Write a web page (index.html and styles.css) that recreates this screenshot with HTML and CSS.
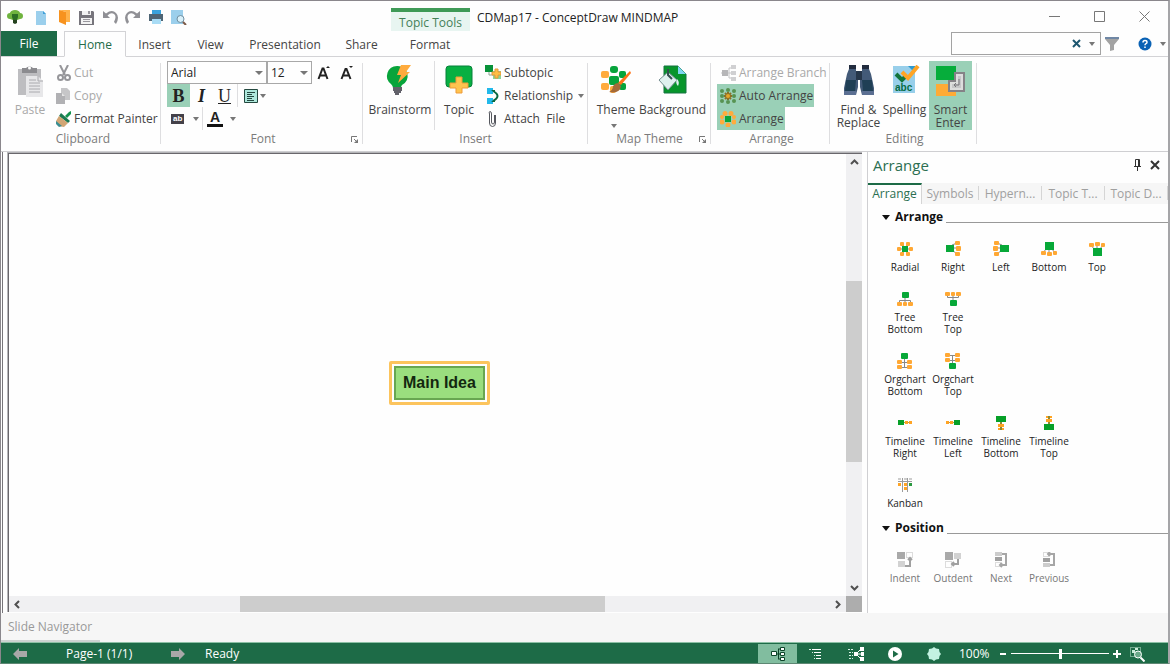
FILE: index.html
```html
<!doctype html>
<html lang="en">
<head>
<meta charset="utf-8">
<title>CDMap17 - ConceptDraw MINDMAP</title>
<link rel="stylesheet" href="styles.css">
</head>

<body>
<div class="app">

<header class="titlebar">
	<div class="quick-access">
		<svg class="logo" width="16" height="16" viewBox="0 0 16 16"><path d="M3 4a5 3 0 0 1 10 0a3 3 0 0 1 0 6l-3 1H6l-3-1a3 3 0 0 1 0-6" fill="#6fb33e"/><path d="M5 5h6v3l-1 3H6L5 8z" fill="#2c6e24"/><path d="M6 11h4v3l-2 1-2-1z" fill="#24421e"/></svg>
		<button aria-label="New"><svg width="16" height="16" viewBox="0 0 16 16"><path d="M3 2h7l3 3v11H3z" fill="#9bcfec"/><path d="M10 2v3h3z" fill="#3f9fd8"/></svg></button>
		<button aria-label="Open"><svg width="16" height="16" viewBox="0 0 16 16"><path d="M3 1h11v12h-4V3z" fill="#ffb24a"/><path d="M3 1l7 2v13l-7-3z" fill="#f7921e"/></svg></button>
		<button aria-label="Save"><svg width="16" height="16" viewBox="0 0 16 16"><path d="M0 2h14l1 1v13H0z" fill="#77757c"/><path d="M3 2h9v4H3zM2 9h11v6H2z" fill="#f2f2f2"/><path d="M9 2h2v3H9zM4 10h7v1H4zM4 12h7v1H4z" fill="#99979d"/></svg></button>
		<button aria-label="Undo"><svg width="16" height="16" viewBox="0 0 16 16"><path d="M1 2v7h7L5.500 6.500Q9 3 12 5t0 8l2 2q4-7 0-11T4 4.500z" fill="#909095"/></svg></button>
		<button aria-label="Redo"><svg width="16" height="16" viewBox="0 0 16 16"><path d="M15 2v7H8l2.500-2.500Q7 3 4 5t0 8l-2 2q-4-7 0-11t10 .5z" fill="#909095"/></svg></button>
		<button aria-label="Print"><svg width="16" height="16" viewBox="0 0 16 16"><path d="M4 1h9v4H4z" fill="#3aa2dd"/><path d="M1 5h14v7H1z" fill="#4f6575"/><path d="M4 10h9v5H4z" fill="#a9dcf5"/></svg></button>
		<button aria-label="Print preview"><svg width="16" height="16" viewBox="0 0 16 16"><path d="M0 1h12v14H0z" fill="#9bcfec"/><circle cx="9.500" cy="10" r="3.500" fill="#d9f1fb" stroke="#6f8ea0"/><path d="M12 13l3 3" stroke="#7b5a48" stroke-width="2"/></svg></button>
	</div>
	<div class="topic-tools">Topic Tools</div>
	<h1 class="window-title">CDMap17 - ConceptDraw MINDMAP</h1>
	<div class="window-buttons">
		<button aria-label="Minimize"><svg width="11" height="11" viewBox="0 0 11 11"><path d="M0 5.500h11"/></svg></button>
		<button aria-label="Maximize"><svg width="11" height="11" viewBox="0 0 11 11"><path d="M.5.5h10v10H.5z"/></svg></button>
		<button aria-label="Close"><svg width="11" height="11" viewBox="0 0 11 11"><path d="M.5.5l10 10M10.500.5l-10 10"/></svg></button>
	</div>
</header>

<nav class="ribbon-tabs">
	<a class="tab file" href="#">File</a>
	<a class="tab active" href="#">Home</a>
	<a class="tab insert" href="#">Insert</a>
	<a class="tab view" href="#">View</a>
	<a class="tab presentation" href="#">Presentation</a>
	<a class="tab share" href="#">Share</a>
	<a class="tab format" href="#">Format</a>
	<div class="search">
		<input type="text" aria-label="Search">
		<button aria-label="Clear"><svg width="9" height="9" viewBox="0 0 9 9"><path d="M1 1l7 7M8 1L1 8" stroke="#1d566f" stroke-width="2"/></svg></button>
		<button aria-label="Search options"><i class="caret"></i></button>
	</div>
	<button class="tool-filter" aria-label="Filter"><svg width="14" height="14" viewBox="0 0 14 14"><path d="M0 2h14L9 8v5l-4 1V8z" fill="#a3a3a3"/><path d="M0 0h14v2H0z" fill="#6f87a5"/></svg></button>
	<button class="tool-help" aria-label="Help"><svg width="14" height="14" viewBox="0 0 14 14"><circle cx="7" cy="7" r="6.500" fill="#0a62b5"/><path d="M5 5.500q0-2 2-2t2 1.700q0 1-1 1.500t-1 1.500M7 9.500v1.500" fill="none" stroke="#fff" stroke-width="1.500"/></svg></button>
	<button class="tool-more" aria-label="More"><i class="caret"></i></button>
</nav>

<div class="ribbon">
	<section class="group clipboard">
		<div class="group-body">
			<button class="big" disabled><svg width="32" height="32" viewBox="0 0 32 32"><path d="M4 4h23v26H4z" fill="#bdbdc0"/><path d="M8 8V3h4a4 3 0 0 1 7 0h4v5z" fill="#8b8b8f"/><circle cx="15.500" cy="3" r="1.500" fill="#fff"/><path d="M12 11h12l5 5v16H12z" fill="#e7e7e9"/><path d="M24 11v5h5M15 15h7M15 18h11M15 21h11M15 24h11M15 27h11" fill="none" stroke="#aaaaae"/></svg><span>Paste</span></button>
			<div class="rows">
				<button class="small" disabled><svg width="16" height="16" viewBox="0 0 16 16"><path d="M4 0l5 10M12 0L7 10" fill="none" stroke="#96969a" stroke-width="2"/><circle cx="4.500" cy="12.500" r="2.500" fill="none" stroke="#96969a" stroke-width="2"/><circle cx="11.500" cy="12.500" r="2.500" fill="none" stroke="#96969a" stroke-width="2"/></svg>Cut</button>
				<button class="small" disabled><svg width="16" height="16" viewBox="0 0 16 16"><path d="M5 0h6l3 3v9H5z" fill="#c6c6c8"/><path d="M0 5h6l3 3v8H0z" fill="#b1b1b4"/><path d="M6 5v3h3z" fill="#e6e6e6"/></svg>Copy</button>
				<button class="small"><svg width="16" height="16" viewBox="0 0 16 16"><path d="M15 0v3l-4 4-2-2 4-4z" fill="#14934e"/><path d="M5 2l9 8-2 2-9-7z" fill="#1c7a51"/><path d="M3 5l9 7-4 4-6-1-2-5z" fill="#d2a675"/><path d="M0 10l6 5-3 1-3-3z" fill="#398e92"/></svg>Format Painter</button>
			</div>
		</div>
		<h2>Clipboard</h2>
	</section>

	<section class="group font">
		<div class="group-body stack">
			<div class="row">
				<span class="select family"><select aria-label="Font"><option>Arial</option></select></span>
				<span class="select size"><select aria-label="Font size"><option>12</option></select></span>
				<button class="key" aria-label="Increase font size"><svg width="14" height="16" viewBox="0 0 14 16"><path d="M1.500 14L5.500 3.500h1L10.500 14M3 10.500h6" fill="none" stroke="#222" stroke-width="2"/><path d="M9 3l2-2 2 2z" fill="#222"/></svg></button>
				<button class="key" aria-label="Decrease font size"><svg width="14" height="16" viewBox="0 0 14 16"><path d="M1.500 14L5.500 4h1L10.500 14M3 10.500h6" fill="none" stroke="#222" stroke-width="2"/><path d="M9 1l2 2 2-2z" fill="#222"/></svg></button>
			</div>
			<div class="row">
				<button class="key bold on">B</button>
				<button class="key italic">I</button>
				<button class="key underline">U</button>
				<button class="key align" aria-label="Align"><svg width="14" height="14" viewBox="0 0 14 14"><path d="M.5.5h13v13H.5z" fill="#aee8dc" stroke="#24483f"/><path d="M3 3.500h8M3 5.500h5M3 7.500h7M3 9.500h5M3 11.500h7" stroke="#24483f"/></svg><i class="caret"></i></button>
			</div>
			<div class="row">
				<button class="key marker"><span class="chip">ab</span><i class="caret"></i></button>
				<button class="key color"><span class="ink">A</span><i class="caret"></i></button>
			</div>
		</div>
		<h2>Font</h2>
		<button class="launcher" aria-label="Font settings"><svg width="7" height="7" viewBox="0 0 7 7"><path d="M.5 6V.5H6M3 3l3 3" fill="none" stroke="#777"/><path d="M7 3v4H3z" fill="#777"/></svg></button>
	</section>

	<section class="group insert-group">
		<div class="group-body">
			<button class="big brainstorm"><svg width="32" height="32" viewBox="0 0 32 32"><path d="M13 1a10 10 0 0 1 5 19q-1 1-1 3H9q0-2-2-4a10 10 0 0 1 6-18" fill="#08a43b"/><path d="M9 23h9M9 25h9M10 27h7M11 29h4" stroke="#62616a" stroke-width="2"/><path d="M17 0h10l-5 7h4L14 18l3-8h-4z" fill="#ffab3d"/></svg><span>Brainstorm</span></button>
			<i class="divider"></i>
			<button class="big topic"><svg width="32" height="32" viewBox="0 0 32 32"><rect x="3" y="1" width="26" height="21" rx="3" fill="#08b042" stroke="#07803a"/><path d="M13 12h6v6h6v5h-6v5h-6v-5H7v-5h6z" fill="#ffc44f" stroke="#ee9b3a"/></svg><span>Topic</span></button>
			<div class="rows">
				<button class="small"><svg width="16" height="16" viewBox="0 0 16 16"><path d="M0 0h8v7H0z" fill="#079239"/><path d="M4 7v3h4" fill="none" stroke="#8ba293"/><path d="M8 6h8v8H8z" fill="#8cd596"/><path d="M10 4h3v3h3v3h-3v3h-3v-3H7V7h3z" fill="#ffbf45" stroke="#e3983c"/></svg>Subtopic</button>
				<button class="small"><svg width="16" height="16" viewBox="0 0 16 16"><path d="M2 0h6v6H2zM2 10h6v6H2z" fill="#22b9eb"/><path d="M8 3q9 5 0 10" fill="none" stroke="#0a683e" stroke-width="2"/><path d="M6 2h4v3zM6 14h4v-3z" fill="#0a683e"/></svg>Relationship<i class="caret"></i></button>
				<button class="small"><svg width="16" height="16" viewBox="0 0 16 16"><path d="M9.500 4v7q0 2-1.500 2t-1.500-2V3q0-2.500-1.500-2.500T4.500 3v9q0 3.500 3 3.500t3-3.500V4" fill="none" stroke="#55575e"/></svg>Attach&nbsp; File</button>
			</div>
		</div>
		<h2>Insert</h2>
	</section>

	<section class="group map-theme">
		<div class="group-body">
			<button class="big theme"><svg width="32" height="32" viewBox="0 0 32 32"><g fill="#07a43c"><rect x="9" y="11" width="10" height="9" rx="2"/><rect x="10" y="1" width="8" height="7" rx="3"/><rect x="19" y="6" width="7" height="7" rx="2"/><rect x="19" y="18" width="7" height="7" rx="2"/></g><g fill="#ffab3d"><rect x="1" y="6" width="8" height="7" rx="2"/><rect x="1" y="18" width="8" height="7" rx="2"/><rect x="10" y="21" width="6" height="7" rx="2"/></g><path d="M30 6l1 2-10 12-3-2z" fill="#ff7318"/><path d="M18 18l3 3q-1 8-12 6 4-2 4-6 2-3 5-3" fill="#a46a39"/></svg><span>Theme</span><i class="caret"></i></button>
			<button class="big background"><svg width="32" height="32" viewBox="0 0 32 32"><path d="M7 1h14l8 8v19H7z" fill="#07952b" stroke="#167342"/><path d="M21 1l8 8h-8z" fill="#7ed5ef"/><path d="M11 7l9 8-9 10-9-10z" fill="#dff1ef" stroke="#768e92"/><path d="M11 4v6l4 4" fill="none" stroke="#345050" stroke-width="2"/><path d="M20 14q3 3 1 7-3-3-1-7" fill="#dff1ef"/></svg><span>Background</span></button>
		</div>
		<h2>Map Theme</h2>
		<button class="launcher" aria-label="Map theme settings"><svg width="7" height="7" viewBox="0 0 7 7"><path d="M.5 6V.5H6M3 3l3 3" fill="none" stroke="#777"/><path d="M7 3v4H3z" fill="#777"/></svg></button>
	</section>

	<section class="group arrange">
		<div class="group-body">
			<div class="rows">
				<button class="small" disabled><svg width="16" height="16" viewBox="0 0 16 16"><path d="M1 8h12M9 3v10M9 3h4M9 13h4" fill="none" stroke="#c4c4c6"/><path d="M2 5h6v6H2z" fill="#b6b6b8"/><path d="M11 0h5v4h-5zM11 6h5v4h-5zM11 12h5v4h-5z" fill="#d0d0d2"/></svg>Arrange Branch</button>
				<button class="small on"><svg width="16" height="16" viewBox="0 0 16 16"><g fill="#579352"><circle cx="2" cy="3" r="2"/><circle cx="2" cy="8" r="2"/><circle cx="2" cy="13" r="2"/><circle cx="14" cy="3" r="2"/><circle cx="14" cy="8" r="2"/><circle cx="14" cy="13" r="2"/><circle cx="8" cy="2" r="2"/><circle cx="8" cy="14" r="2"/></g><path d="M5 5l6 6M11 5l-6 6M8 4v8M4 8h8" stroke="#8b7025" stroke-width="2"/><circle cx="8" cy="8" r="2" fill="#e5a629"/></svg>Auto Arrange</button>
				<button class="small on"><svg width="16" height="16" viewBox="0 0 16 16"><g fill="#ffab3d"><circle cx="5" cy="2.500" r="2.500"/><circle cx="11" cy="2.500" r="2.500"/><circle cx="2" cy="6" r="2"/><circle cx="2" cy="11" r="2.500"/><circle cx="14" cy="6" r="2"/><circle cx="14" cy="11" r="2.500"/><circle cx="8" cy="14" r="2.500"/></g><path d="M5 5h6v6H5z" fill="#08a43b"/></svg>Arrange</button>
			</div>
		</div>
		<h2>Arrange</h2>
	</section>

	<section class="group editing">
		<div class="group-body">
			<button class="big find"><svg width="32" height="32" viewBox="0 0 32 32"><path d="M6 4h7v3l2 3v12l-2 8H1v-7L4 9zM26 4h-7v3l-2 3v12l2 8h12v-7L28 9z" fill="#435a78"/><path d="M13 6h6v9h-6z" fill="#26364a"/><path d="M3 15h10l-1 11H2zM19 15h10l1 11H20z" fill="#1f3f55"/><path d="M6 0h7v4H6zM19 0h7v4h-7z" fill="#222c3e"/><path d="M1 26h12v4H1zM19 26h12v4H19z" fill="#5b6f92"/></svg><span>Find &amp;<br>Replace</span></button>
			<button class="big spelling"><svg width="32" height="32" viewBox="0 0 32 32"><path d="M4 1h22v27H4z" fill="#98cfea"/><path d="M19 1l7 7v-7z" fill="#2d9ad0"/><path d="M7 9l6 6 5-5" fill="none" stroke="#12743a" stroke-width="4"/><path d="M13 7l6 6L29 1" fill="none" stroke="#ffa425" stroke-width="4"/><text class="abc" x="6" y="26">abc</text></svg><span>Spelling</span></button>
			<button class="big smart on"><svg width="32" height="32" viewBox="0 0 32 32"><path d="M1 1h20v14H1z" fill="#06ad3b"/><path d="M1 19h20v12H1z" fill="#ffab36"/><path d="M20 8h9v18H14V16h6z" fill="#ddd" stroke="#858287" stroke-width="2"/><path d="M23 11h3v12h-9v-4h6z" fill="#c6c6c8"/><path d="M24 14v6h-4m1-2l-2 2 2 2" fill="none" stroke="#77757a"/></svg><span>Smart<br>Enter</span></button>
		</div>
		<h2>Editing</h2>
	</section>
</div>

<main class="workspace">
	<div class="editor">
		<div class="canvas">
			<div class="node"><span>Main Idea</span></div>
		</div>
		<div class="scroll vertical">
			<button aria-label="Scroll up"><svg width="9" height="6" viewBox="0 0 9 6"><path d="M1 5l3.500-3.500L8 5"/></svg></button>
			<i class="before"></i><i class="thumb"></i><i class="after"></i>
			<button aria-label="Scroll down"><svg width="9" height="6" viewBox="0 0 9 6"><path d="M1 1l3.500 3.500L8 1"/></svg></button>
		</div>
		<div class="scroll horizontal">
			<button aria-label="Scroll left"><svg width="6" height="9" viewBox="0 0 6 9"><path d="M5 1L1.500 4.500 5 8"/></svg></button>
			<i class="before"></i><i class="thumb"></i><i class="after"></i>
			<button aria-label="Scroll right"><svg width="6" height="9" viewBox="0 0 6 9"><path d="M1 1l3.500 3.500L1 8"/></svg></button>
		</div>
		<i class="corner"></i>
	</div>

	<aside class="panel">
		<div class="panel-head">
			<h2>Arrange</h2>
			<button aria-label="Pin"><svg width="9" height="12" viewBox="0 0 9 12"><path d="M2.500 7V.5h4V7M1 7.500h7M4.500 8v4M5.500 1v6" fill="none" stroke="#333"/></svg></button>
			<button aria-label="Close panel"><svg width="10" height="10" viewBox="0 0 10 10"><path d="M1 1l8 8M9 1L1 9" stroke="#333" stroke-width="2"/></svg></button>
		</div>
		<nav class="panel-tabs">
			<a class="active" href="#">Arrange</a>
			<a class="symbols" href="#">Symbols</a>
			<a href="#">Hypern...</a>
			<a href="#">Topic T...</a>
			<a href="#">Topic D...</a>
		</nav>

		<h3 class="section-head"><i></i>Arrange</h3>
		<div class="items">
			<div class="item-row">
				<button><svg width="16" height="16" viewBox="0 0 16 16"><path d="M2 8h12M5 2l6 12M11 2L5 14" stroke="#888"/><g fill="#ffa834"><rect x="3" y="1" width="4" height="4" rx="1"/><rect x="9" y="1" width="4" height="4" rx="1"/><rect x="0" y="6" width="4" height="4" rx="1"/><rect x="12" y="6" width="4" height="4" rx="1"/><rect x="3" y="11" width="4" height="4" rx="1"/><rect x="9" y="11" width="4" height="4" rx="1"/></g><path d="M5 5h6v6H5z" fill="#07a838"/></svg>Radial</button>
				<button><svg width="16" height="16" viewBox="0 0 16 16"><path d="M8 7h5M7 4l5-2M7 9l5 4" stroke="#888"/><path d="M1 4h8v7H1z" fill="#07a838"/><g fill="#ffa834"><rect x="10" y="0" width="5" height="4" rx="1"/><rect x="11" y="5" width="5" height="5" rx="1"/><rect x="10" y="11" width="5" height="4" rx="1"/></g></svg>Right</button>
				<button><svg width="16" height="16" viewBox="0 0 16 16"><path d="M3 7h5M9 4L4 2M9 9l-5 4" stroke="#888"/><path d="M7 4h9v7H7z" fill="#07a838"/><g fill="#ffa834"><rect x="1" y="0" width="5" height="4" rx="1"/><rect x="0" y="5" width="5" height="5" rx="1"/><rect x="1" y="11" width="5" height="4" rx="1"/></g></svg>Left</button>
				<button><svg width="16" height="16" viewBox="0 0 16 16"><path d="M8 8v5M5 8l-3 4M11 8l3 4" stroke="#888"/><path d="M4 1h9v8H4z" fill="#07a838"/><g fill="#ffa834"><rect x="0" y="10" width="5" height="4" rx="1"/><rect x="6" y="11" width="5" height="4" rx="1"/><rect x="12" y="10" width="4" height="4" rx="1"/></g></svg>Bottom</button>
				<button><svg width="16" height="16" viewBox="0 0 16 16"><path d="M8 3v5M2 4l3 4M14 4l-3 4" stroke="#888"/><path d="M4 7h9v8H4z" fill="#07a838"/><g fill="#ffa834"><rect x="0" y="2" width="5" height="4" rx="1"/><rect x="6" y="1" width="5" height="4" rx="1"/><rect x="12" y="2" width="4" height="4" rx="1"/></g></svg>Top</button>
			</div>
			<div class="item-row">
				<button><svg width="16" height="16" viewBox="0 0 16 16"><path d="M8 6v6M2.500 12V9.500h11V12" fill="none" stroke="#888"/><rect x="5" y="1" width="7" height="6" rx="1" fill="#07a838"/><g fill="#ffa834"><rect x="0" y="11" width="5" height="4" rx="1"/><rect x="6" y="11" width="4" height="4" rx="1"/><rect x="11" y="11" width="5" height="4" rx="1"/></g></svg>Tree<br>Bottom</button>
				<button><svg width="16" height="16" viewBox="0 0 16 16"><path d="M8 4v6M2.500 4v2.500h11V4" fill="none" stroke="#888"/><rect x="5" y="9" width="7" height="6" rx="1" fill="#07a838"/><g fill="#ffa834"><rect x="0" y="1" width="5" height="4" rx="1"/><rect x="6" y="1" width="4" height="4" rx="1"/><rect x="11" y="1" width="5" height="4" rx="1"/></g></svg>Tree<br>Top</button>
			</div>
			<div class="item-row">
				<button><svg width="16" height="16" viewBox="0 0 16 16"><path d="M7.500 6v8M3 9.500h9M3 14.500h9" stroke="#888"/><rect x="4" y="0" width="7" height="6" rx="1" fill="#07a838"/><g fill="#ffa834"><rect x="0" y="7" width="5" height="4" rx="1"/><rect x="10" y="7" width="5" height="4" rx="1"/><rect x="0" y="12" width="5" height="4" rx="1"/><rect x="10" y="12" width="5" height="4" rx="1"/></g></svg>Orgchart<br>Bottom</button>
				<button><svg width="16" height="16" viewBox="0 0 16 16"><path d="M7.500 2v9M3 2.500h9M3 7.500h9" stroke="#888"/><rect x="4" y="10" width="7" height="6" rx="1" fill="#07a838"/><g fill="#ffa834"><rect x="0" y="0" width="5" height="4" rx="1"/><rect x="10" y="0" width="5" height="4" rx="1"/><rect x="0" y="5" width="5" height="4" rx="1"/><rect x="10" y="5" width="5" height="4" rx="1"/></g></svg>Orgchart<br>Top</button>
			</div>
			<div class="item-row">
				<button><svg width="16" height="16" viewBox="0 0 16 16"><path d="M5 7.500h9" stroke="#b79a4a"/><path d="M1 5h6v5H1z" fill="#07a028"/><path d="M8 6h3v3H8zM12 6h3v3h-3z" fill="#ffa424"/></svg>Timeline<br>Right</button>
				<button><svg width="16" height="16" viewBox="0 0 16 16"><path d="M2 7.500h9" stroke="#b79a4a"/><path d="M9 5h6v5H9z" fill="#07a028"/><path d="M1 6h3v3H1zM5 6h3v3H5z" fill="#ffa424"/></svg>Timeline<br>Left</button>
				<button><svg width="16" height="16" viewBox="0 0 16 16"><path d="M8 6v9" stroke="#8a8a38" stroke-width="2"/><path d="M3 1h10v6H3z" fill="#07a028"/><path d="M5 9h6v3H5zM5 13h2v2H5zM9 13h2v2H9z" fill="#ffa424"/></svg>Timeline<br>Bottom</button>
				<button><svg width="16" height="16" viewBox="0 0 16 16"><path d="M8 1v9" stroke="#8a8a38" stroke-width="2"/><path d="M3 9h10v6H3z" fill="#07a028"/><path d="M5 4h6v3H5zM5 1h2v2H5zM9 1h2v2H9z" fill="#ffa424"/></svg>Timeline<br>Top</button>
			</div>
			<div class="item-row">
				<button><svg width="16" height="16" viewBox="0 0 16 16"><path d="M1 4.500h14M5.500 1v14M10.500 1v14M1 2h3M7 2h3M12 2h3" stroke="#9b9b9b"/><path d="M1 6h3v3H1zM7 6h3v3H7zM7 10h3v3H7z" fill="#ffa424"/><path d="M12 6h3v3h-3z" fill="#2a9a40"/></svg>Kanban</button>
			</div>
		</div>

		<h3 class="section-head"><i></i>Position</h3>
		<div class="items">
			<div class="item-row">
				<button disabled><svg width="16" height="16" viewBox="0 0 16 16"><path d="M0 0h8v7H0z" fill="#a9a9a9"/><path d="M1 9h7v6H1z" fill="#d2d2d2"/><path d="M9.500.5h6v5h-6z" fill="none" stroke="#bbb" stroke-dasharray="1 1"/><path d="M8 14h5V6M11 8l2-2 2 2" fill="none" stroke="#a0a0a0" stroke-width="2"/></svg>Indent</button>
				<button disabled><svg width="16" height="16" viewBox="0 0 16 16"><path d="M0 0h8v8H0z" fill="#a9a9a9"/><path d="M9 1h7v6H9z" fill="#d2d2d2"/><path d="M.5 9.500h6v6h-6z" fill="none" stroke="#bbb" stroke-dasharray="1 1"/><path d="M13 7v5H7M9 10l-2 2 2 2" fill="none" stroke="#a0a0a0" stroke-width="2"/></svg>Outdent</button>
				<button disabled><svg width="16" height="16" viewBox="0 0 16 16"><path d="M2 0h7v4H2z" fill="#ccc"/><path d="M2 5h7v4H2z" fill="#a0a0a0"/><path d="M2.500 10.500h5v4h-5z" fill="none" stroke="#bbb" stroke-dasharray="1 1"/><path d="M9 2h4v11H7M9 11l-2 2 2 2" fill="none" stroke="#a6a6a6" stroke-width="2"/></svg>Next</button>
				<button disabled><svg width="16" height="16" viewBox="0 0 16 16"><path d="M2 11h7v4H2z" fill="#ccc"/><path d="M2 6h7v4H2z" fill="#a0a0a0"/><path d="M2.500.5h5v4h-5z" fill="none" stroke="#bbb" stroke-dasharray="1 1"/><path d="M9 13h4V2H7M9 0L7 2l2 2" fill="none" stroke="#a6a6a6" stroke-width="2"/></svg>Previous</button>
			</div>
		</div>
	</aside>
</main>

<div class="navigator"><a href="#">Slide Navigator</a></div>

<footer class="statusbar">
	<button class="page-prev" aria-label="Previous page"><svg width="14" height="12" viewBox="0 0 14 12"><path d="M0 6l6-6v3h8v6H6v3z" fill="#a8a8a8"/></svg></button>
	<span class="page">Page-1 (1/1)</span>
	<button class="page-next" aria-label="Next page"><svg width="14" height="12" viewBox="0 0 14 12"><path d="M14 6L8 0v3H0v6h8v3z" fill="#a8a8a8"/></svg></button>
	<span class="ready">Ready</span>
	<div class="modes">
		<button class="on" aria-label="Map view"><svg width="16" height="16" viewBox="0 0 16 16"><path d="M6 8h5M8.500 3v10M8 3h3M8 13h3" fill="none" stroke="#0d4429"/><path d="M1.500 5.500h5v4h-5zM10.500 1.500h4v3h-4zM10.500 6.500h4v3h-4zM10.500 11.500h4v3h-4z" fill="#fff" stroke="#0d4429"/></svg></button>
		<button aria-label="Outline view"><svg width="16" height="16" viewBox="0 0 16 16"><path d="M3 3.500h9M5 6.500h7M7 9.500h5M7 12.500h5" stroke="#fff"/><path d="M0 3.500h2M3 6.500h1M5 9.500h1M5 12.500h1" stroke="#d9f2e6"/></svg></button>
		<button aria-label="Map and outline view"><svg width="16" height="16" viewBox="0 0 16 16"><path d="M0 3.500h6M1 6.500h4M1 9.500h4M1 12.500h4" stroke="#d9f2e6" stroke-dasharray="2 1"/><path d="M8 8l5-5M8 8h6M8 8l5 5" stroke="#fff"/><path d="M6 6h4v4H6zM12 1h4v4h-4zM13 6h3v4h-3zM12 11h4v4h-4z" fill="#fff"/></svg></button>
		<button aria-label="Play"><svg width="14" height="14" viewBox="0 0 14 14"><circle cx="7" cy="7" r="7" fill="#fff"/><path d="M5 3.500v7L10.500 7z" fill="#1d6b47"/></svg></button>
		<button aria-label="Mark"><svg width="14" height="14" viewBox="0 0 14 14"><path d="M7 0l2 1.500 3 .5.500 3L14 7l-1.500 2-.5 3-3 .5L7 14l-2-1.500-3-.5-.5-3L0 7l1.500-2L2 2l3-.5z" fill="#c3f2e1"/></svg></button>
	</div>
	<span class="percent">100%</span>
	<button class="zoom-key" aria-label="Zoom out"><svg width="8" height="8" viewBox="0 0 8 8"><path d="M1 4h6" stroke="#fff" stroke-width="2"/></svg></button>
	<input class="zoom" type="range" min="0" max="100" value="50" aria-label="Zoom">
	<button class="zoom-key" aria-label="Zoom in"><svg width="8" height="8" viewBox="0 0 8 8"><path d="M0 4h8M4 0v8" stroke="#fff" stroke-width="2"/></svg></button>
	<button class="zoom-fit" aria-label="Zoom to fit"><svg width="16" height="16" viewBox="0 0 16 16"><path d="M1.500 1.500h10v9h-10z" fill="none" stroke="#c9ecd9" stroke-dasharray="1 1"/><path d="M3 4h3v3H3zM6 2h3v2H6z" fill="#c9ecd9"/><circle cx="9" cy="8.500" r="3.500" fill="#6ba98a" stroke="#fff"/><path d="M11.500 11.500l4 4" stroke="#fff" stroke-width="2"/></svg></button>
</footer>

</div>
</body>
</html>
```

FILE: styles.css
```css
* {
	box-sizing: border-box;
}

body {
	margin: 0;
	font: 12px/16px "Open Sans", "Noto Sans", sans-serif;
	color: #444;
	background: #fefefe;
}

h1, h2, h3 {
	margin: 0;
	font-size: 12px;
	font-weight: normal;
}

a {
	color: inherit;
	text-decoration: none;
}

button {
	display: flex;
	align-items: center;
	justify-content: center;
	flex: none;
	margin: 0;
	padding: 0;
	border: 0;
	background: none;
	font: inherit;
	color: inherit;
}

button:disabled {
	color: #a9a9a9;
}

svg {
	display: block;
	flex: none;
}

.on {
	background: #9ad0b7;
}

.caret {
	flex: none;
	border: 3px solid transparent;
	border-top: 4px solid #777;
	border-bottom: 0;
}

.app {
	display: flex;
	flex-direction: column;
	height: 100vh;
	border: 1px solid #8a878c;
	border-right: 2px solid #a5a5a8;
	border-bottom-color: #5d8773;
}

/* Title bar */

.titlebar {
	display: flex;
	align-items: center;
	flex: none;
	height: 30px;
}

.quick-access {
	display: flex;
	align-items: center;
	gap: 7px;
	width: 390px;
	padding: 2px 0 0 6px;
}

.logo {
	margin-right: 3px;
}

.topic-tools {
	align-self: flex-end;
	width: 79px;
	height: 23px;
	padding-top: 3px;
	border-top: 4px solid #3f9a57;
	background: #e8f5f1;
	color: #448058;
	text-align: center;
}

.window-title {
	flex: 1;
	padding: 4px 0 0 7px;
	color: #222;
}

.window-buttons {
	display: flex;
	margin-right: 1px;
}

.window-buttons button {
	width: 45px;
	height: 28px;
}

.window-buttons path {
	fill: none;
	stroke: #777;
}

/* Ribbon tabs */

.ribbon-tabs {
	display: flex;
	align-items: center;
	flex: none;
	height: 26px;
	border-bottom: 1px solid #d3d3d6;
}

.tab {
	align-self: stretch;
	padding-top: 6px;
	text-align: center;
}

.file {
	width: 56px;
	margin-right: 7px;
	padding-top: 5px;
	background: #1d6b47;
	color: #fff;
}

.tab.active {
	width: 62px;
	margin-bottom: -1px;
	border: 1px solid #d3d3d6;
	border-bottom-color: #fefefe;
	padding-top: 5px;
	background: #fefefe;
	color: #236b49;
}

.insert {
	width: 57px;
}

.view {
	width: 55px;
}

.presentation {
	width: 94px;
}

.share {
	width: 59px;
}

.format {
	width: 78px;
}

.search {
	display: flex;
	align-items: center;
	align-self: flex-start;
	width: 150px;
	height: 23px;
	margin: 1px 4px 0 auto;
	border: 1px solid #a3a3a3;
}

.search input {
	flex: 1;
	min-width: 0;
	border: 0;
	background: none;
	font: inherit;
}

.search button {
	width: 16px;
	height: 20px;
}

.tool-filter {
	margin-right: 19px;
}

.tool-help {
	margin-right: 8px;
}

.tool-more {
	margin-right: 2px;
}

/* Ribbon */

.ribbon {
	display: flex;
	flex: none;
	height: 95px;
	border-bottom: 1px solid #cfcfd2;
}

.group {
	position: relative;
	flex: none;
	padding-top: 4px;
}

/* The separator is shorter than the group itself. */
.group::after {
	content: "";
	position: absolute;
	top: 6px;
	right: 0;
	width: 1px;
	height: 81px;
	background: #dedee0;
}

.group h2 {
	padding-top: 1px;
	color: #7b7b7b;
	text-align: center;
}

.group-body {
	display: flex;
	height: 69px;
}

.group-body.stack {
	flex-direction: column;
}

.row {
	display: flex;
	align-items: center;
	height: 23px;
}

.big {
	flex-direction: column;
	justify-content: flex-start;
	padding-top: 4px;
	line-height: 13px;
}

.big span {
	margin-top: 6px;
}

.big .caret {
	margin-top: 8px;
	margin-right: 4px;
}

.small {
	height: 23px;
	padding: 1px 1px 0 3px;
	gap: 3px;
	white-space: nowrap;
}

.small .caret {
	margin-left: 2px;
}

.rows {
	display: flex;
	flex-direction: column;
	align-items: flex-start;
}

.clipboard {
	width: 160px;
}

.clipboard h2 {
	padding-left: 4px;
}

.clipboard .big {
	width: 52px;
	padding-left: 6px;
}

.clipboard .small {
	gap: 2px;
}

.font {
	width: 202px;
	padding-left: 6px;
}

.font h2 {
	padding-right: 4px;
}

.insert-group {
	width: 225px;
}

.map-theme {
	width: 123px;
}

.arrange {
	width: 119px;
	padding-left: 6px;
}

.arrange h2 {
	padding-right: 4px;
}

.editing {
	width: 147px;
}

.editing h2 {
	padding-left: 2px;
}

.editing .group-body {
	gap: 2px;
	padding-left: 7px;
}

.brainstorm {
	width: 71px;
	padding-left: 3px;
}

.divider {
	width: 1px;
	background: #dedee0;
}

.topic {
	width: 47px;
	padding-left: 1px;
}

.theme {
	width: 52px;
	margin-left: 2px;
}

.background {
	width: 61px;
}

.find, .smart {
	width: 43px;
}

.spelling {
	width: 45px;
}

.abc {
	font: bold 10px "Liberation Sans", sans-serif;
	fill: #056b43;
}

.launcher {
	position: absolute;
	right: 5px;
	bottom: 8px;
}

/* Font controls */

.select {
	position: relative;
}

.select::after {
	content: "";
	position: absolute;
	top: 10px;
	right: 4px;
	border: 4px solid transparent;
	border-top-color: #777;
	border-bottom: 0;
	pointer-events: none;
}

.select select {
	display: block;
	width: 100%;
	height: 23px;
	padding: 1px 3px 0;
	border: 1px solid #a8a8a8;
	border-radius: 0;
	background: #fefefe;
	appearance: none;
	font: inherit;
	color: #222;
}

.family {
	width: 100px;
}

.size {
	width: 45px;
}

.key {
	width: 23px;
	height: 23px;
	font-family: "Liberation Serif", serif;
	font-size: 18px;
	color: #222;
}

.key .caret {
	margin-left: 2px;
}

.bold {
	font-weight: bold;
}

.italic {
	font-style: italic;
	font-weight: bold;
}

.underline {
	text-decoration: underline;
}

.align {
	width: 34px;
	margin-left: 1px;
	border-left: 1px solid #dedee0;
}

.marker, .color {
	justify-content: space-between;
	width: 36px;
	padding: 0 3px 0 4px;
}

.marker {
	border-right: 1px solid #dedee0;
}

.chip {
	padding: 0 2px;
	background: #444149;
	font: bold 8px/10px "Liberation Sans", sans-serif;
	color: #fff;
}

.ink {
	width: 16px;
	border-bottom: 3px solid #111;
	font: bold 14px/13px "Liberation Sans", sans-serif;
}

/* Map canvas */

.workspace {
	display: flex;
	flex: 1;
	min-height: 0;
}

/* Edge of the collapsed dock on the left */
.workspace::before {
	content: "";
	width: 1px;
	margin: 0 4px 0 1px;
	background: #77757a;
}

.editor {
	display: grid;
	grid-template-columns: 1fr 16px;
	grid-template-rows: 1fr 16px;
	flex: 1;
	margin: 0 5px 1px 0;
	padding: 1px 0 0 1px;
	border: solid #b5b5b8;
	border-width: 1px 0 0 1px;
	box-shadow: inset 1px 1px #69676c;
}

.canvas {
	position: relative;
}

.node {
	position: absolute;
	left: 380px;
	top: 207px;
	padding: 2px;
	border: 3px solid #fcc45d;
	border-radius: 2px;
}

.node span {
	display: block;
	padding: 7px;
	border: 2px solid #68a651;
	background: #9ade7e;
	font: bold 16px/16px "Liberation Sans", sans-serif;
	color: #13280f;
}

.scroll {
	display: flex;
	background: #f0f0f2;
}

.vertical {
	flex-direction: column;
}

.scroll button {
	width: 16px;
	height: 16px;
}

.scroll path {
	fill: none;
	stroke: #505050;
	stroke-width: 2;
}

.thumb {
	background: #cdcdcd;
}

.vertical .before {
	flex: 110;
}

.vertical .thumb {
	flex: 181;
}

.vertical .after {
	flex: 117;
}

.horizontal .before {
	flex: 215;
}

.horizontal .thumb {
	flex: 364;
}

.horizontal .after {
	flex: 225;
}

.corner {
	background: #adadad;
}

/* Side panel */

.panel {
	flex: none;
	width: 301px;
	border-left: 1px solid #cfcfd2;
}

.panel-head {
	display: flex;
	align-items: center;
	gap: 8px;
	height: 31px;
	padding: 0 8px 5px 5px;
}

.panel-head h2 {
	flex: 1;
	font-size: 15px;
	color: #2c6f51;
}

.panel-tabs {
	display: flex;
	height: 21px;
	background: #f6f6f6;
	color: #a0a0a0;
}

.panel-tabs a {
	width: 63px;
	margin: 3px 0 4px;
	border-right: 1px solid #d5d5d5;
	line-height: 16px;
	text-align: center;
	white-space: nowrap;
}

.panel-tabs .active {
	width: 54px;
	margin: 0;
	border-top: 2px solid #1d6b47;
	line-height: 18px;
	background: #fefefe;
	color: #2c6f51;
}

.panel-tabs .symbols {
	width: 57px;
}

.section-head {
	display: flex;
	align-items: center;
	height: 20px;
	margin-top: 3px;
	padding-left: 14px;
	font-weight: bold;
	color: #111;
}

.section-head i {
	margin-right: 5px;
	border: 4px solid transparent;
	border-top: 5px solid #111;
	border-bottom: 0;
}

.section-head::after {
	content: "";
	flex: 1;
	height: 1px;
	margin: 11px 0 0 3px;
	background: #999;
}

.items {
	display: flex;
	flex-direction: column;
	gap: 18px;
	padding: 14px 13px 6px;
}

.item-row {
	display: flex;
}

.item-row button {
	flex-direction: column;
	justify-content: flex-start;
	width: 48px;
	font-size: 10px;
	line-height: 12px;
	color: #222;
}

.item-row button:disabled {
	color: #777;
}

.item-row svg {
	margin-bottom: 4px;
}

/* Bottom bars */

.navigator {
	flex: none;
	height: 29px;
	background: #f6f6f6;
	color: #999;
}

.navigator a {
	display: block;
	width: 99px;
	height: 29px;
	padding: 6px 0 0 7px;
	border-bottom: 2px solid #cdd3d1;
	white-space: nowrap;
}

.statusbar {
	display: flex;
	align-items: center;
	flex: none;
	height: 21px;
	padding-top: 1px;
	border-top: 1px solid #8cc0a5;
	background: #1d6b47;
	color: #fff;
}

.page-prev {
	margin-left: 12px;
}

.page {
	width: 105px;
	margin-left: 39px;
}

.ready {
	flex: 1;
	margin-left: 20px;
}

.modes {
	display: flex;
	align-self: stretch;
}

.modes button {
	width: 39px;
}

.modes .on {
	background: #81bd9f;
}

.percent {
	width: 40px;
	margin-left: 6px;
}

.zoom-key {
	width: 8px;
}

.zoom {
	width: 98px;
	height: 12px;
	margin: 0 4px;
	background: linear-gradient(#fff, #fff) center / 100% 1px no-repeat;
	appearance: none;
}

.zoom::-webkit-slider-thumb {
	width: 3px;
	height: 10px;
	background: #fff;
	appearance: none;
}

.zoom-fit {
	margin: 0 23px 0 8px;
}
```
